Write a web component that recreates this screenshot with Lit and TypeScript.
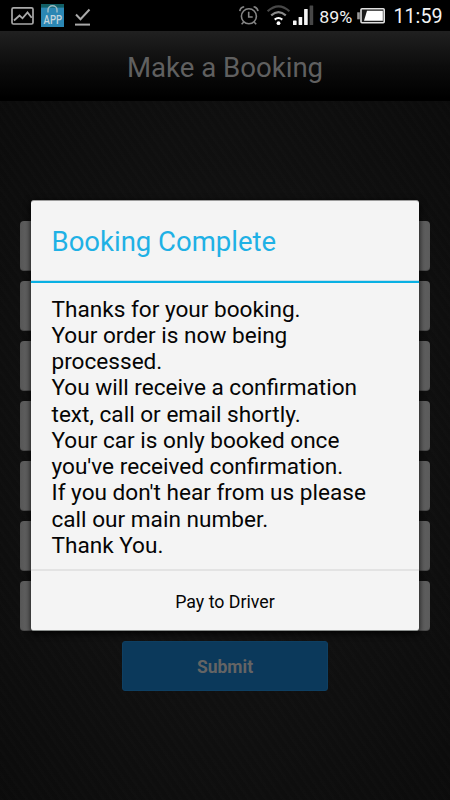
import { LitElement, html, css } from "lit";
import { customElement } from "lit/decorators.js";

@customElement("status-bar")
class StatusBar extends LitElement {
  static styles = css`
    :host { display: flex; height: 31px; background: #000; color: #e9e9e9; }
    svg { display: block; width: 450px; height: 31px; }
    text { font-family: Roboto, sans-serif; }
    .app { font-size: 12.5px; font-weight: 500; fill: #c4d5dc; }
    .battery { font-size: 17px; fill: #f0f0f0; }
    .clock { font-size: 20.5px; fill: #f4f4f4; }
  `;
  render() {
    return html`<svg viewBox="0 0 450 31">
      <g fill="none" stroke="#a9a9a9" stroke-width="1.7">
        <rect x="12" y="7.8" width="21" height="16.2" rx="1.5" />
        <path d="M14 20.5l5.5-5 3 2.8 5-5.8 4.2 5.2" stroke-width="1.8" />
        <path d="M76 14.5l4.5 4.7L89.5 9.5" stroke-width="2" />
        <path d="M75 24.6h15" stroke-width="2" />
      </g>
      <rect x="41" y="4" width="23" height="23" fill="#2b87b4" />
      <rect x="41" y="4" width="23" height="3.6" fill="#125f66" />
      <path d="M48 12.5V10a4.5 4.2 0 0 1 9 0v2.5" fill="none" stroke="#9bbac2" stroke-width="1.5" />
      <text class="app" x="43.6" y="24.2" textLength="18.5" lengthAdjust="spacingAndGlyphs">APP</text>
      <g fill="none" stroke="#858585" stroke-width="1.6">
        <circle cx="248.9" cy="16.3" r="7.5" />
        <path d="M248.7 11.8v5.2h4M239.8 11.2q.5-3.8 4.4-4.4M258 11.2q-.5-3.8-4.4-4.4M243.8 22l-2.2 2.3M254 22l2.2 2.3" />
      </g>
      <g fill="none" stroke-width="2.1">
        <path d="M267.6 11.2q11-9.7 21.8 0" stroke="#484848" />
        <path d="M271.2 15.4q7.2-6.5 14.6 0" stroke="#8a8a8a" />
        <path d="M274.7 19.6q3.7-3.2 7.6 0" stroke="#fff" />
      </g>
      <circle cx="278.5" cy="23.2" r="1.9" fill="#fff" />
      <g fill="#f5f5f5">
        <rect x="293" y="20.5" width="3.6" height="4.5" rx=".6" />
        <rect x="298.6" y="17" width="3.6" height="8" rx=".6" />
        <rect x="304.1" y="9" width="3.6" height="16" rx=".6" />
        <rect x="309.6" y="5.5" width="3.6" height="19.5" rx=".6" fill="#474747" />
      </g>
      <text class="battery" x="319.3" y="22.6" textLength="33" lengthAdjust="spacingAndGlyphs">89%</text>
      <rect x="357.2" y="12.3" width="2.6" height="7" fill="#999" />
      <rect x="361" y="8.7" width="23.2" height="14" rx="1" fill="#1c1c1c" stroke="#e0e0e0" stroke-width="1.6" />
      <path d="M367 10.7h15.8v10H364z" fill="#fff" />
      <text class="clock" x="393.5" y="23.2" textLength="49" lengthAdjust="spacingAndGlyphs">11:59</text>
    </svg>`;
  }
}

@customElement("booking-dialog")
class BookingDialog extends LitElement {
  static styles = css`
    :host {
      display: flex; flex-direction: column; box-sizing: border-box;
      width: 388px; height: 431px; background: #f4f4f4; border-radius: 3px;
      border-top: 1px solid #9c9c9c; border-bottom: 1px solid #8b8f8d;
      box-shadow: 0 2px 6px 1px rgba(0, 0, 0, .75);
      font-family: Roboto, sans-serif; color: #050505; overflow: hidden;
    }
    .title {
      box-sizing: border-box; height: 82px; flex: none; padding: 0 20.5px;
      font-size: 27.5px; line-height: 82px; color: #1fb1e5;
      border-bottom: 2px solid #08b0e3; white-space: nowrap;
      box-shadow: inset 0 -1px #c4dfea;
    }
    .message { flex: 1; padding: 13.5px 20.5px 0; font-size: 22.6px; line-height: 26.25px; white-space: pre; }
    .action {
      height: 61px; flex: none; box-sizing: border-box; border-top: 2px solid #e3e3e3;
      display: flex; align-items: center; justify-content: center; font-size: 17.8px;
      padding-top: 2px;
    }
  `;
  render() {
    const lines = [
      "Thanks for your booking.", "Your order is now being", "processed.",
      "You will receive a confirmation", "text, call or email shortly.",
      "Your car is only booked once", "you've received confirmation.",
      "If you don't hear from us please", "call our main number.", "Thank You.",
    ];
    return html`<div class="title">Booking Complete</div>
      <div class="message">${lines.map((l) => html`<div>${l}</div>`)}</div>
      <div class="action">Pay to Driver</div>`;
  }
}

@customElement("app-root")
class AppRoot extends LitElement {
  static styles = css`
    :host {
      display: flex; flex-direction: column; position: relative; width: 450px; height: 800px;
      overflow: hidden; font-family: Roboto, sans-serif;
      background:
        repeating-linear-gradient(55deg, rgba(255,255,255,.008) 0 2px, transparent 4px 7px),
        radial-gradient(ellipse 330px 520px at 50% 55%, #111 40%, #0b0b0b 100%);
    }
    .header {
      height: 70px; flex: none; display: flex; align-items: center; justify-content: center;
      background: linear-gradient(#202020, #0c0c0c 50%, #000 96%);
      color: #606060; font-size: 27.6px; padding-top: 3px; box-sizing: border-box;
    }
    .form { display: flex; flex-direction: column; align-items: center; gap: 10px; padding-top: 120px; }
    .field {
      width: 410px; height: 50px; border-radius: 4px; box-sizing: border-box;
      background: linear-gradient(90deg, #555, #666 8px, #666 400px, #5a5a5a);
      border-bottom: 1px solid #4b4b4b;
    }
    .submit {
      width: 206px; height: 50px; border-radius: 3px; background: #0b395b; color: #646464;
      font-size: 17.5px; font-weight: 700; display: flex; align-items: center; justify-content: center;
      border: 1px solid #0e3f62; box-sizing: border-box; padding-top: 2px;
    }
    booking-dialog { position: absolute; left: 31px; top: 200px; }
  `;
  render() {
    return html`<status-bar></status-bar>
      <div class="header"><span>Make a Booking</span></div>
      <div class="form">
        ${Array.from({ length: 7 }, () => html`<div class="field"></div>`)}
        <div class="submit">Submit</div>
      </div>
      <booking-dialog></booking-dialog>`;
  }
}
